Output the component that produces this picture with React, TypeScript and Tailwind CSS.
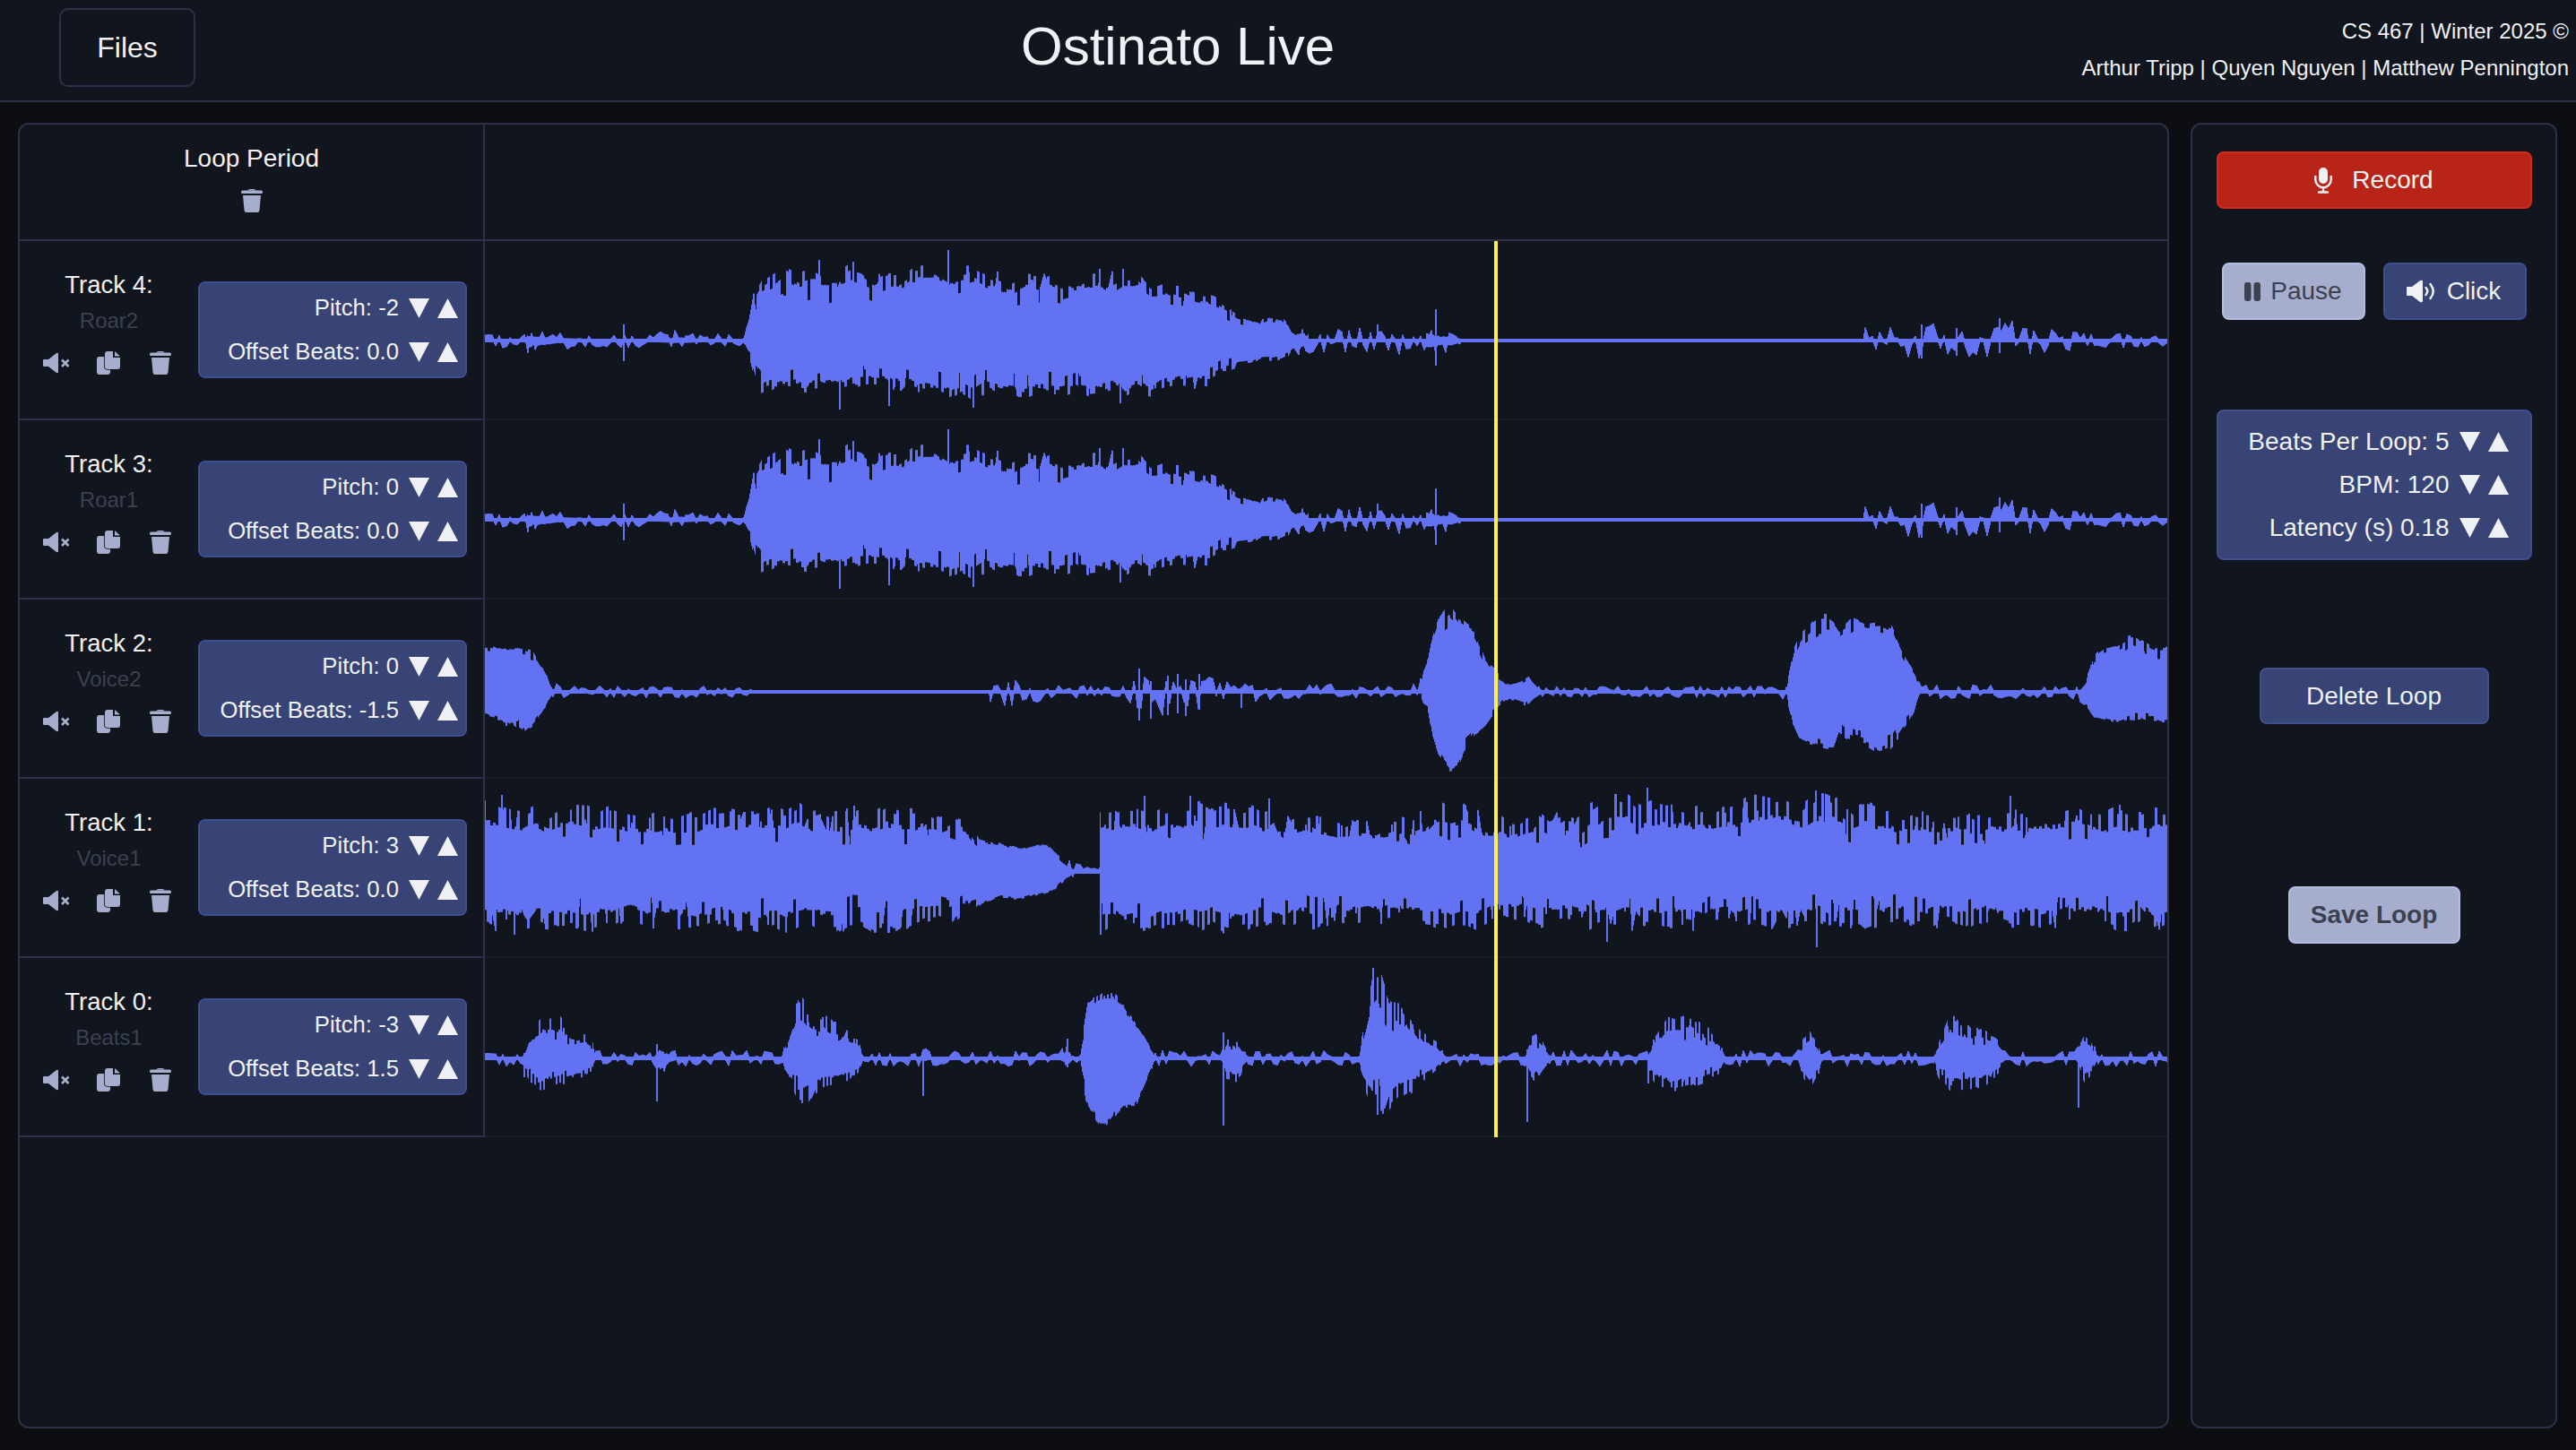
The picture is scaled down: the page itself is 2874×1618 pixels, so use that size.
import React, { useMemo } from 'react';

type Pt = [number, number, number];
type Spike = [number, number, number];

interface WaveDef {
  seed: number;
  base: number;
  core: number;
  spike: number;
  bin: number;
  floor: number;
  smooth: [number, number][];
  thin: [number, number][];
  pts: Pt[];
  spikes: Spike[];
}

const X0 = 541;
const X1 = 2418;

const roar: Omit<WaveDef, 'base'> = {
  seed: 11,
  core: 0.74,
  spike: 0.28,
  bin: 3,
  floor: 0,
  smooth: [],
  thin: [[1460, 1590], [1630, 2418]],
  pts: [
    [541, 8, 7], [585, 8, 8], [588, 8, 14], [620, 8, 10], [680, 6, 6], [720, 7, 7], [760, 10, 7], [800, 6, 5], [828, 7, 5],
    [836, 27, 20], [842, 56, 44], [849, 72, 58], [874, 90, 62], [913, 84, 58], [951, 88, 56], [976, 72, 52],
    [1040, 84, 64], [1104, 78, 64], [1168, 74, 64], [1232, 80, 62], [1295, 70, 58], [1346, 52, 52], [1365, 40, 36],
    [1404, 22, 24], [1429, 30, 24], [1442, 14, 15], [1487, 15, 12], [1525, 12, 11], [1536, 18, 12], [1559, 12, 16],
    [1580, 18, 16], [1601, 12, 12], [1619, 8, 12], [1628, 8, 9], [1630, 0, 0], [2079, 0, 0], [2081, 14, 14],
    [2143, 18, 18], [2182, 16, 18], [2230, 22, 16], [2283, 16, 15], [2330, 6, 5], [2389, 7, 8], [2418, 4, 4],
  ],
  spikes: [
    [695, 18, 23], [1057, 101, 0], [936, 0, 77], [991, 0, 73], [1085, 0, 75], [1249, 0, 70], [913, 90, 0], [951, 88, 0],
    [1601, 35, 28], [2143, 18, 20], [2230, 25, 14], [2182, 14, 17], [1536, 18, 0], [1226, 80, 0], [1252, 80, 0],
  ],
};

const waves: WaveDef[] = [
  { ...roar, base: 111 },
  { ...roar, base: 111 },
  {
    seed: 23,
    base: 103,
    core: 0.94,
    spike: 0.2,
    bin: 3,
    floor: 0,
    smooth: [],
    thin: [[626, 1585], [1722, 1990], [2143, 2320]],
    pts: [
      [541, 50, 25], [568, 48, 38], [582, 48, 49], [594, 47, 35], [606, 25, 17], [616, 10, 7], [626, 5, 5], [838, 5, 5],
      [840, 0, 0], [1103, 0, 0], [1105, 16, 16], [1158, 13, 13], [1168, 5, 5], [1257, 6, 6], [1270, 22, 26],
      [1302, 20, 26], [1334, 20, 26], [1359, 12, 12], [1384, 8, 14], [1423, 8, 6], [1525, 7, 5], [1530, 8, 7], [1571, 5, 4],
      [1583, 10, 8], [1592, 30, 15], [1598, 60, 50], [1604, 80, 68], [1616, 93, 85], [1627, 80, 85], [1645, 68, 48],
      [1657, 37, 35], [1669, 25, 20], [1672, 18, 15], [1684, 12, 14], [1705, 18, 14], [1722, 7, 6], [1728, 4, 4],
      [1986, 5, 5], [1993, 10, 8], [2001, 50, 35], [2007, 60, 50], [2028, 78, 60], [2045, 82, 60], [2051, 78, 43],
      [2069, 82, 58], [2096, 77, 70], [2111, 68, 60], [2129, 35, 35], [2143, 6, 6], [2318, 7, 7], [2327, 15, 15],
      [2336, 43, 27], [2357, 53, 30], [2378, 60, 33], [2386, 58, 33], [2418, 52, 30],
    ],
    spikes: [[1270, 26, 32], [1283, 12, 30], [1302, 18, 26], [1313, 20, 24], [1322, 14, 27], [1337, 20, 20], [1384, 5, 18]],
  },
  {
    seed: 37,
    base: 104,
    core: 0.62,
    spike: 0.3,
    bin: 3,
    floor: 0,
    smooth: [[1092, 1226]],
    thin: [],
    pts: [
      [541, 78, 66], [600, 75, 68], [700, 72, 64], [800, 70, 66], [900, 74, 66], [1000, 75, 66], [1060, 72, 58], [1080, 65, 50],
      [1092, 40, 35], [1110, 32, 28], [1140, 28, 28], [1168, 32, 24], [1180, 18, 16], [1200, 8, 8], [1222, 3, 5], [1226, 4, 5],
      [1227, 68, 70], [1300, 76, 66], [1400, 74, 68], [1500, 58, 58], [1560, 62, 58], [1600, 82, 62], [1650, 72, 62],
      [1680, 60, 58], [1760, 68, 62], [1790, 90, 64], [1860, 80, 64], [1900, 72, 64], [1980, 86, 64], [2050, 86, 64],
      [2100, 70, 60], [2200, 70, 64], [2300, 74, 64], [2418, 74, 64],
    ],
    spikes: [[559, 86, 0], [573, 0, 70], [1276, 85, 0], [1327, 85, 0], [1415, 82, 0], [1227, 0, 70], [1837, 94, 0], [2025, 91, 0], [2026, 0, 84], [1792, 0, 78], [2242, 85, 0]],
  },
  {
    seed: 41,
    base: 112,
    core: 0.56,
    spike: 0.34,
    bin: 2,
    floor: 7,
    smooth: [[1209, 1290]],
    thin: [],
    pts: [
      [541, 4, 4], [580, 4, 4], [584, 6, 12], [590, 25, 25], [605, 48, 40], [620, 50, 32], [640, 35, 28], [660, 22, 14], [665, 5, 5],
      [728, 5, 5], [734, 16, 18], [750, 10, 10], [760, 5, 5], [870, 5, 5], [878, 25, 28], [890, 72, 52], [900, 65, 54], [915, 52, 38],
      [940, 40, 25], [958, 20, 15], [965, 5, 5], [1025, 5, 5], [1030, 11, 8], [1040, 5, 5], [1180, 5, 5], [1190, 18, 10], [1197, 6, 6],
      [1205, 10, 10], [1212, 60, 60], [1225, 78, 72], [1232, 80, 76], [1245, 72, 68], [1265, 45, 55], [1280, 20, 20], [1290, 7, 7],
      [1360, 5, 5], [1368, 22, 22], [1380, 18, 24], [1395, 5, 5], [1515, 5, 5], [1520, 30, 30], [1530, 90, 60], [1540, 100, 63],
      [1555, 65, 50], [1575, 40, 40], [1600, 22, 15], [1615, 6, 6], [1700, 5, 5], [1704, 18, 16], [1712, 30, 26], [1722, 18, 14],
      [1735, 5, 5], [1836, 5, 5], [1845, 28, 25], [1860, 50, 38], [1880, 50, 36], [1900, 38, 30], [1920, 20, 14], [1926, 5, 5],
      [2004, 5, 5], [2010, 20, 20], [2018, 33, 40], [2028, 16, 18], [2036, 5, 5], [2155, 5, 5], [2163, 18, 24], [2175, 50, 36],
      [2195, 40, 32], [2215, 34, 28], [2232, 18, 12], [2238, 5, 5], [2314, 5, 5], [2320, 18, 16], [2325, 28, 25], [2335, 16, 14],
      [2345, 5, 5], [2418, 5, 5],
    ],
    spikes: [[584, 6, 21], [732, 16, 48], [1029, 10, 42], [1190, 22, 10], [1364, 29, 75], [1703, 10, 71], [1838, 0, 28], [2318, 10, 55], [1531, 101, 0], [1536, 0, 63]],
  },
];

const makeRng = (seed: number) => () => {
  seed = (seed + 0x6d2b79f5) | 0;
  let t = Math.imul(seed ^ (seed >>> 15), 1 | seed);
  t = (t + Math.imul(t ^ (t >>> 7), 61 | t)) ^ t;
  return ((t ^ (t >>> 14)) >>> 0) / 4294967296;
};

const envAt = (w: WaveDef, x: number): [number, number] => {
  const pts = w.pts;
  for (let i = 1; i < pts.length; i++) {
    if (x <= pts[i][0]) {
      const [x0, u0, d0] = pts[i - 1];
      const [x1, u1, d1] = pts[i];
      const k = (x - x0) / (x1 - x0 || 1);
      return [Math.max(w.floor, u0 + (u1 - u0) * k), Math.max(w.floor, d0 + (d1 - d0) * k)];
    }
  }
  const last = pts[pts.length - 1];
  return [last[1], last[2]];
};

const buildPath = (w: WaveDef) => {
  const rng = makeRng(w.seed);
  const count = X1 - X0 + 2;
  const knots = Array.from({ length: Math.ceil(count / 4) + 2 }, () => {
    const sign = rng() > 0.5 ? 1 : -1;
    return sign * Math.pow(rng(), 0.9);
  });
  // slow wobble so the top and bottom edges do not look traced
  const slowUp = Array.from({ length: Math.ceil(count / 14) + 2 }, () => 0.86 + rng() * 0.2);
  const slowDn = Array.from({ length: Math.ceil(count / 14) + 2 }, () => 0.86 + rng() * 0.2);
  const lerp = (a: number[], p: number) => {
    const i = Math.floor(p);
    return a[i] + (a[i + 1] - a[i]) * (p - i);
  };
  const inRange = (ranges: [number, number][], x: number) => ranges.some(([a, b]) => x >= a && x <= b);
  const roll = (x: number) => {
    if (inRange(w.smooth, x)) return 0.88 + rng() * 0.12;
    const r = rng();
    if (r < w.spike) return 1 - rng() * 0.14;
    if (r > 0.9) return w.core - 0.1 - rng() * 0.12;
    return w.core + rng() * 0.1;
  };
  const signal = (i: number, x: number) => {
    const v = lerp(knots, i / 4);
    const [u, d] = envAt(w, x);
    return v > 0 ? -u * v : -d * v;
  };

  let d = '';
  let rU = roll(X0);
  let rD = roll(X0);
  for (let i = 0; i < count - 1; i++) {
    const x = X0 + i;
    if (i % w.bin === 0) rU = roll(x);
    if ((i + 1) % w.bin === 0) rD = roll(x);
    const [up, dn] = envAt(w, x);
    const solid = inRange(w.thin, x) ? 0 : Math.min(1, Math.max(0, (Math.max(up, dn) - 8) / 12));
    const y0 = signal(i, x);
    const y1 = signal(i + 1, x + 1);
    const su = up * rU * solid * lerp(slowUp, i / 14);
    const sd = dn * rD * solid * lerp(slowDn, i / 14);
    let top = Math.min(y0, y1, -su) - 2;
    let bot = Math.max(y0, y1, sd) + 2;
    for (const [sx, sTop, sBot] of w.spikes) {
      if (x >= sx && x <= sx + 1) {
        top = Math.min(top, -sTop);
        bot = Math.max(bot, sBot);
      }
    }
    d += `M${x + 0.5} ${(w.base + top).toFixed(1)}V${(w.base + bot).toFixed(1)}`;
  }
  return d;
};

const Waveform = ({ index }: { index: number }) => {
  const d = useMemo(() => buildPath(waves[index]), [index]);
  return (
    <svg width={X1 - X0} height={198} viewBox={`${X0} 0 ${X1 - X0} 198`} className="block">
      <path d={d} stroke="#6372f3" strokeWidth={1} fill="none" />
    </svg>
  );
};

const DownArrow = () => (
  <svg width="23" height="22" viewBox="0 0 23 22" className="shrink-0">
    <path d="M0 0H23L11.5 22Z" fill="#f0f1f5" />
  </svg>
);

const UpArrow = () => (
  <svg width="23" height="22" viewBox="0 0 23 22" className="shrink-0">
    <path d="M0 22H23L11.5 0Z" fill="#f0f1f5" />
  </svg>
);

const TrashIcon = () => (
  <svg width="24" height="26" viewBox="0 0 24 26" fill="#a7aecd" className="block">
    <path d="M7 1.5Q8 0 10 0H14Q16 0 17 1.5Z" />
    <rect x="0" y="1.5" width="24" height="3.5" rx="1.5" />
    <path d="M2 7H22L20.5 23.5Q20.3 26 18 26H6Q3.7 26 3.5 23.5Z" />
  </svg>
);

const MuteIcon = () => (
  <svg width="30" height="24" viewBox="0 0 30 24" fill="#a7aecd" className="block">
    <path d="M0 9Q0 8 1 8H6L15 1Q17 0 17 2V22Q17 24 15 23L6 16H1Q0 16 0 15Z" />
    <path d="M21 8.5L28.5 16M28.5 8.5L21 16" stroke="#a7aecd" strokeWidth="2.6" />
  </svg>
);

const CopyIcon = () => (
  <svg width="26" height="26" viewBox="0 0 26 26" fill="#a7aecd" className="block">
    <rect x="0" y="6" width="15" height="20" rx="3" />
    <path
      d="M12 0H18V7H26V17Q26 20 23 20H12Q9 20 9 17V3Q9 0 12 0Z"
      stroke="#11151e"
      strokeWidth="1.6"
      paintOrder="stroke"
    />
    <path d="M20 0L26 5.5H20Z" />
  </svg>
);

const MicIcon = () => (
  <svg width="20" height="29" viewBox="0 0 20 29" className="block">
    <rect x="5" y="0" width="10" height="18" rx="5" fill="#f0f1f5" />
    <path
      d="M1.3 10V13.5A8.7 8.7 0 0 0 18.7 13.5V10M10 22.5V27.5M5 27.5H15"
      stroke="#f0f1f5"
      strokeWidth="2.4"
      fill="none"
      strokeLinecap="round"
    />
  </svg>
);

const PauseIcon = () => (
  <svg width="18" height="21" viewBox="0 0 18 21" fill="#3c4152" className="block">
    <rect x="0" y="0" width="7.5" height="21" rx="3" />
    <rect x="10.5" y="0" width="7.5" height="21" rx="3" />
  </svg>
);

const SpeakerIcon = () => (
  <svg width="35" height="26" viewBox="0 0 35 26" className="block">
    <path d="M0 9Q0 8 1 8H6L15 1Q18 0 18 2V24Q18 26 15 25L6 18H1Q0 18 0 17Z" fill="#f0f1f5" />
    <path
      d="M21.5 9Q25 13 21.5 17M26.5 5Q33 13 26.5 21"
      stroke="#f0f1f5"
      strokeWidth="2.5"
      fill="none"
      strokeLinecap="round"
    />
  </svg>
);

const Stepper = ({ label, tall }: { label: string; tall?: boolean }) => (
  <div className={`flex items-center justify-end ${tall ? 'h-[48px] pr-[24px] text-[28px]' : 'h-[49px] pr-[8px] text-[25.7px]'}`}>
    <span className="mr-[11px] whitespace-nowrap">{label}</span>
    <DownArrow />
    <span className="w-[9px]" />
    <UpArrow />
  </div>
);

const tracks = [
  { id: 4, name: 'Roar2', pitch: '-2', offset: '0.0' },
  { id: 3, name: 'Roar1', pitch: '0', offset: '0.0' },
  { id: 2, name: 'Voice2', pitch: '0', offset: '-1.5' },
  { id: 1, name: 'Voice1', pitch: '3', offset: '0.0' },
  { id: 0, name: 'Beats1', pitch: '-3', offset: '1.5' },
];

const App = () => {
  return (
    <div className="flex h-[1618px] flex-col overflow-hidden bg-[#0d0e12] font-['Liberation_Sans',sans-serif] text-[#f0f1f5]">
      <header className="flex h-[114px] shrink-0 items-start border-b-2 border-[#2d3048] bg-[#11151e]">
        <button className="mt-[9px] ml-[66px] h-[88px] w-[152px] rounded-[10px] border-2 border-[#2d3048] text-[32px]">
          Files
        </button>
        <h1 className="mt-[22px] ml-[921px] text-[60px] leading-[60px] whitespace-nowrap">Ostinato Live</h1>
        <div className="mt-[14px] mr-[8px] ml-auto text-right text-[24px] leading-[41px] whitespace-nowrap">
          <div>CS 467 | Winter 2025 ©</div>
          <div>Arthur Tripp | Quyen Nguyen | Matthew Pennington</div>
        </div>
      </header>

      <main className="mt-[23px] flex h-[1457px] gap-[24px] px-[20px]">
        <section className="w-[2400px] overflow-hidden rounded-[12px] border-2 border-[#2d3048] bg-[#11151e]">
          <div className="flex h-[130px] border-b-2 border-[#2d3048]">
            <div className="flex w-[519px] shrink-0 flex-col items-center border-r-2 border-[#2d3048] pt-[22px]">
              <div className="text-[28px] leading-[32px]">Loop Period</div>
              <div className="mt-[18px]">
                <TrashIcon />
              </div>
            </div>
          </div>

          <div className="relative">
            {tracks.map((t, i) => (
              <div key={t.id} className="flex h-[200px]">
                <div className="flex w-[519px] shrink-0 items-center border-r-2 border-b-2 border-[#2d3048]">
                  <div className="flex w-[199px] shrink-0 flex-col items-center self-start pt-[33px]">
                    <div className="text-[27.5px] leading-[32px]">Track {t.id}:</div>
                    <div className="mt-[8px] text-[24px] leading-[32px] text-[#3c4152]">{t.name}</div>
                    <div className="mt-[18px] mr-[4px] flex items-center">
                      <MuteIcon />
                      <span className="w-[30px]" />
                      <CopyIcon />
                      <span className="w-[33px]" />
                      <TrashIcon />
                    </div>
                  </div>
                  <div className="flex h-[108px] w-[300px] shrink-0 flex-col justify-center rounded-[8px] border-2 border-[#3f4f8f] bg-[#384376]">
                    <Stepper label={`Pitch: ${t.pitch}`} />
                    <Stepper label={`Offset Beats: ${t.offset}`} />
                  </div>
                </div>
                <div className="flex-1 border-b-2 border-[#1a1e2a]">
                  <Waveform index={i} />
                </div>
              </div>
            ))}
            <div className="absolute top-0 bottom-0 left-[1645px] w-[4px] bg-[#fdf24b]" />
          </div>
        </section>

        <aside className="flex w-[409px] flex-col items-center overflow-hidden rounded-[12px] border-2 border-[#2d3048] bg-[#11151e] pt-[30px]">
          <button className="flex h-[64px] w-[352px] shrink-0 items-center justify-center gap-[22px] rounded-[8px] border-2 border-[#d42a1c] bg-[#b82418] text-[28px]">
            <MicIcon />
            Record
          </button>

          <div className="mt-[60px] flex gap-[20px]">
            <button className="flex h-[64px] w-[160px] items-center justify-center gap-[11px] rounded-[8px] border-2 border-[#b3bbe0] bg-[#a7aecd] text-[28px] text-[#3c4152]">
              <PauseIcon />
              Pause
            </button>
            <button className="flex h-[64px] w-[160px] items-center justify-center gap-[10px] rounded-[8px] border-2 border-[#3f4f8f] bg-[#384376] pr-[2px] text-[28px]">
              <SpeakerIcon />
              Click
            </button>
          </div>

          <div className="mt-[100px] flex h-[168px] w-[352px] shrink-0 flex-col justify-center rounded-[8px] border-2 border-[#3f4f8f] bg-[#384376]">
            <Stepper tall label="Beats Per Loop: 5" />
            <Stepper tall label="BPM: 120" />
            <Stepper tall label="Latency (s) 0.18" />
          </div>

          <button className="mt-[120px] h-[63px] w-[256px] shrink-0 rounded-[8px] border-2 border-[#3f4f8f] bg-[#384376] text-[28px]">
            Delete Loop
          </button>

          <button className="mt-[181px] h-[64px] w-[192px] shrink-0 rounded-[8px] border-2 border-[#b3bbe0] bg-[#a7aecd] text-[28px] font-bold text-[#3c4152]">
            Save Loop
          </button>
        </aside>
      </main>
    </div>
  );
};

export default App;
